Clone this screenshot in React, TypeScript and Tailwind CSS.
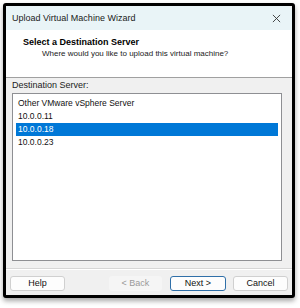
import React from "react";

const servers = ["Other VMware vSphere Server", "10.0.0.11", "10.0.0.18", "10.0.0.23"];

const WizardButton: React.FC<{ label: string; className: string }> = ({ label, className }) => (
	<button className={`h-[15px] rounded-[3px] text-[9px] leading-none ${className}`}>{label}</button>
);

export default function App() {
	const selected = "10.0.0.18";

	return (
		<div className="w-[300px] h-[308px] bg-white pt-[3px] pl-[3px] font-['Liberation_Sans',Arial,sans-serif]">
			<div className="w-[292px] h-[295px] border-[3px] border-black rounded-[3px] bg-[#f0f0f0] flex flex-col shadow-[0_3px_5px_rgba(0,0,0,0.35)]">
				{/* title bar */}
				<div className="h-[24px] bg-[#e9f4f7] flex items-center justify-between pl-[6px] pr-[11px] rounded-tr-[5px]">
					<span className="text-[9px] text-[#1a1a1a] pt-[1px]">Upload Virtual Machine Wizard</span>
					<svg width="9" height="9" viewBox="0 0 10 10" className="text-[#333]">
						<path d="M1 1L9 9M9 1L1 9" stroke="currentColor" strokeWidth="1" />
					</svg>
				</div>

				{/* header */}
				<div className="h-[48px] bg-white border-b border-[#a0a0a0] pt-[6px]">
					<div className="pl-[17px] text-[9px] font-bold text-black leading-[12px]">Select a Destination Server</div>
					<div className="pl-[36px] text-[8px] text-[#222] leading-[12px]">Where would you like to upload this virtual machine?</div>
				</div>

				{/* body */}
				<div className="flex-1 flex flex-col px-[6px] pr-[10px] pt-[2px] pb-[7px] border-b border-[#d6d6d6]">
					<div className="text-[9px] text-[#222] leading-[11px] mb-[2px]">Destination Server:</div>
					<ul className="flex-1 bg-white border border-[#8e8f93] pt-[3px] px-[3px]">
						{servers.map(s => (
							<li
								key={s}
								className={`h-[13px] flex items-center pl-[2px] text-[8.5px] ${s === selected ? "bg-[#0078d7] text-white" : "text-[#111]"}`}
							>
								{s}
							</li>
						))}
					</ul>
				</div>

				{/* footer */}
				<div className="h-[26px] border-t border-white flex items-center px-[4px] pt-[1px]">
					<WizardButton label="Help" className="w-[55px] bg-[#fdfdfd] border border-[#d0d0d0] text-[#111]" />
					<div className="flex-1" />
					<WizardButton label="< Back" className="w-[53px] bg-[#f5f5f5] text-[#9a9a9a] mr-[8px]" />
					<WizardButton label="Next >" className="w-[56px] bg-[#fdfdfd] border border-[#2f6fa8] text-[#111] mr-[7px]" />
					<WizardButton label="Cancel" className="w-[55px] bg-[#fdfdfd] border border-[#d0d0d0] text-[#111]" />
				</div>
			</div>
		</div>
	);
}
